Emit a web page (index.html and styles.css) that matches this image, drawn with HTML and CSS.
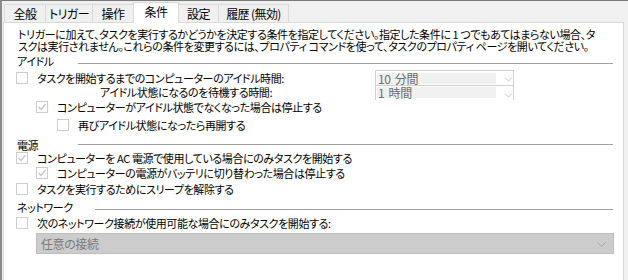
FILE: index.html
```html
<!DOCTYPE html>
<html lang="ja">
<head>
<meta charset="utf-8">
<link rel="stylesheet" href="styles.css">
</head>
<body>
<div class="frame">
  <div class="tabs">
    <div class="tab t1">全般</div>
    <div class="tab t2">トリガー</div>
    <div class="tab t3">操作</div>
    <div class="tab t4 active">条件</div>
    <div class="tab t5">設定</div>
    <div class="tab t6">履歴 (無効)</div>
  </div>
  <div class="panel">
    <div class="desc">トリガーに加えて、タスクを実行するかどうかを決定する条件を指定してください。指定した条件に 1 つでもあてはまらない場合、タ<br>スクは実行されません。これらの条件を変更するには、プロパティ コマンドを使って、タスクのプロパティ ページを開いてください。</div>

    <div class="grp g-idle"><span class="glabel">アイドル</span><span class="rule"></span></div>

    <div class="idlegrid">
      <div class="row r-cb1 lv1"><span class="cb"></span><span>タスクを開始するまでのコンピューターのアイドル時間:</span></div>
      <div class="dd dd1"><span class="ddtext">10 分間</span><svg class="chev" width="9" height="5" viewBox="0 0 9 5"><polyline points="0.5,0.5 4.5,4.5 8.5,0.5" fill="none" stroke="#b4b4b4" stroke-width="1"/></svg></div>
      <div class="row r-wait"><span class="waitlabel">アイドル状態になるのを待機する時間:</span></div>
      <div class="dd dd2"><span class="ddtext">1 時間</span><svg class="chev" width="9" height="5" viewBox="0 0 9 5"><polyline points="0.5,0.5 4.5,4.5 8.5,0.5" fill="none" stroke="#b4b4b4" stroke-width="1"/></svg></div>
    </div>

    <div class="row r-cb2 lv2"><span class="cb checked"><svg width="10" height="10" viewBox="0 0 10 10"><polyline points="1.5,5 4,7.5 8.5,2" fill="none" stroke="#c4c4c4" stroke-width="1.2"/></svg></span><span>コンピューターがアイドル状態でなくなった場合は停止する</span></div>
    <div class="row r-cb3 lv3"><span class="cb"></span><span>再びアイドル状態になったら再開する</span></div>

    <div class="grp g-power"><span class="glabel">電源</span><span class="rule"></span></div>
    <div class="row r-cb4 lv1"><span class="cb checked"><svg width="10" height="10" viewBox="0 0 10 10"><polyline points="1.5,5 4,7.5 8.5,2" fill="none" stroke="#c4c4c4" stroke-width="1.2"/></svg></span><span>コンピューターを AC 電源で使用している場合にのみタスクを開始する</span></div>
    <div class="row r-cb5 lv2"><span class="cb checked"><svg width="10" height="10" viewBox="0 0 10 10"><polyline points="1.5,5 4,7.5 8.5,2" fill="none" stroke="#c4c4c4" stroke-width="1.2"/></svg></span><span>コンピューターの電源がバッテリに切り替わった場合は停止する</span></div>
    <div class="row r-cb6 lv1"><span class="cb"></span><span>タスクを実行するためにスリープを解除する</span></div>

    <div class="grp g-net"><span class="glabel">ネットワーク</span><span class="rule"></span></div>
    <div class="row r-cb7 lv1"><span class="cb"></span><span>次のネットワーク接続が使用可能な場合にのみタスクを開始する:</span></div>
    <div class="dd3"><span>任意の接続</span><svg class="chev" width="9" height="5" viewBox="0 0 9 5"><polyline points="0.5,0.5 4.5,4.5 8.5,0.5" fill="none" stroke="#a8a8a8" stroke-width="1"/></svg></div>
  </div>
</div>
</body>
</html>
```

FILE: styles.css
```css
html, body {
  margin: 0;
  padding: 0;
}
body {
  width: 628px;
  height: 280px;
  overflow: hidden;
  background: #f0f0f0;
  font-family: "Noto Sans CJK JP", "Noto Sans", sans-serif;
  font-size: 11px;
  font-feature-settings: "palt";
  letter-spacing: -0.4px;
  color: #000;
}
.frame {
  box-sizing: border-box;
  height: 280px;
  border-top: 1px solid #7a7a7a;
  border-left: 2px solid #8a8a8a;
  padding-left: 1px;
}
.tabs {
  display: flex;
  align-items: flex-end;
  margin-top: 3px;
  padding-left: 1px;
  height: 18px;
}
.tab {
  box-sizing: border-box;
  height: 18px;
  border: 1px solid #d9d9d9;
  border-bottom: none;
  margin-right: -1px;
  display: flex;
  align-items: center;
  justify-content: center;
  line-height: 1;
  padding-top: 1px;
  font-size: 12px;
  letter-spacing: -0.6px;
}
.t1 { width: 42px; }
.t2 { width: 48px; }
.t3 { width: 42px; }
.t4 { width: 46px; }
.t5 { width: 41px; }
.t6 { width: 71px; }
.tab.active {
  background: #fff;
  height: 21px;
  margin-top: -2px;
  margin-bottom: -1px;
  position: relative;
  z-index: 1;
  padding-top: 0;
  padding-bottom: 2px;
}
.panel {
  box-sizing: border-box;
  width: 621px;
  height: 258px;
  border: 1px solid #d9d9d9;
  border-bottom: none;
  background: #fff;
  overflow: hidden;
}
.desc {
  margin-top: 5px;
  padding-left: 14px;
  line-height: 12px;
  white-space: nowrap;
}
.grp {
  display: flex;
  height: 12px;
  padding-left: 13px;
  padding-right: 10px;
  line-height: 12px;
}
.glabel {
  min-width: 61px;
}
.g-net .glabel {
  min-width: 78px;
}
.rule {
  flex: 1;
  height: 1px;
  background: #a0a0a0;
}
.g-idle { margin-top: 3px; }
.g-idle .rule { margin-top: 8px; }
.g-power { margin-top: 7px; }
.g-power .rule { margin-top: 5px; }
.g-net { margin-top: 5px; }
.g-net .rule { margin-top: 8px; }

.row {
  display: flex;
  align-items: center;
  height: 14px;
  line-height: 12px;
  white-space: nowrap;
}
.lv1 { padding-left: 12px; }
.lv2 { padding-left: 32px; }
.lv3 { padding-left: 53px; }
.cb {
  box-sizing: border-box;
  width: 12px;
  height: 12px;
  border: 1px solid #cccccc;
  background: #fff;
  margin-right: 9px;
  flex: none;
  display: flex;
  align-items: center;
  justify-content: center;
}
.cb svg { display: block; }

.idlegrid {
  display: grid;
  grid-template-columns: 371px 139px;
  grid-template-rows: 15px 14px;
  margin-top: 3px;
}
.r-cb1 { height: 15px; }
.waitlabel { padding-left: 96px; }
.dd {
  box-sizing: border-box;
  border: 1px solid #cfcfcf;
  display: flex;
  align-items: center;
  padding: 1px;
  color: #6d6d6d;
}
.dd1 { height: 16px; }
.dd2 { height: 14px; border-top: none; border-bottom: none; margin-top: 1px; align-items: flex-start; }
.ddtext {
  width: 118px;
  height: 11px;
  background: #f0f0f0;
  line-height: 11px;
  padding-left: 1px;
  flex: none;
  font-size: 12px;
  word-spacing: 2px;
}
.chev {
  margin-left: 9px;
  margin-top: 2px;
}
.dd2 .chev { margin-top: 6px; }

.r-cb2 { margin-top: 1px; }
.r-cb3 { margin-top: 4px; }
.r-cb4 { margin-top: 0px; }
.r-cb5 { margin-top: 1px; }
.r-cb6 { margin-top: 2px; }
.r-cb7 { margin-top: 3px; }

.dd3 {
  box-sizing: border-box;
  margin-top: 3px;
  margin-left: 32px;
  width: 578px;
  height: 21px;
  background: #cccccc;
  border: 1px solid #bdbdbd;
  color: #7a7a7a;
  display: flex;
  align-items: center;
  justify-content: space-between;
  padding-left: 4px;
  padding-right: 7px;
  font-size: 12px;
}
```
